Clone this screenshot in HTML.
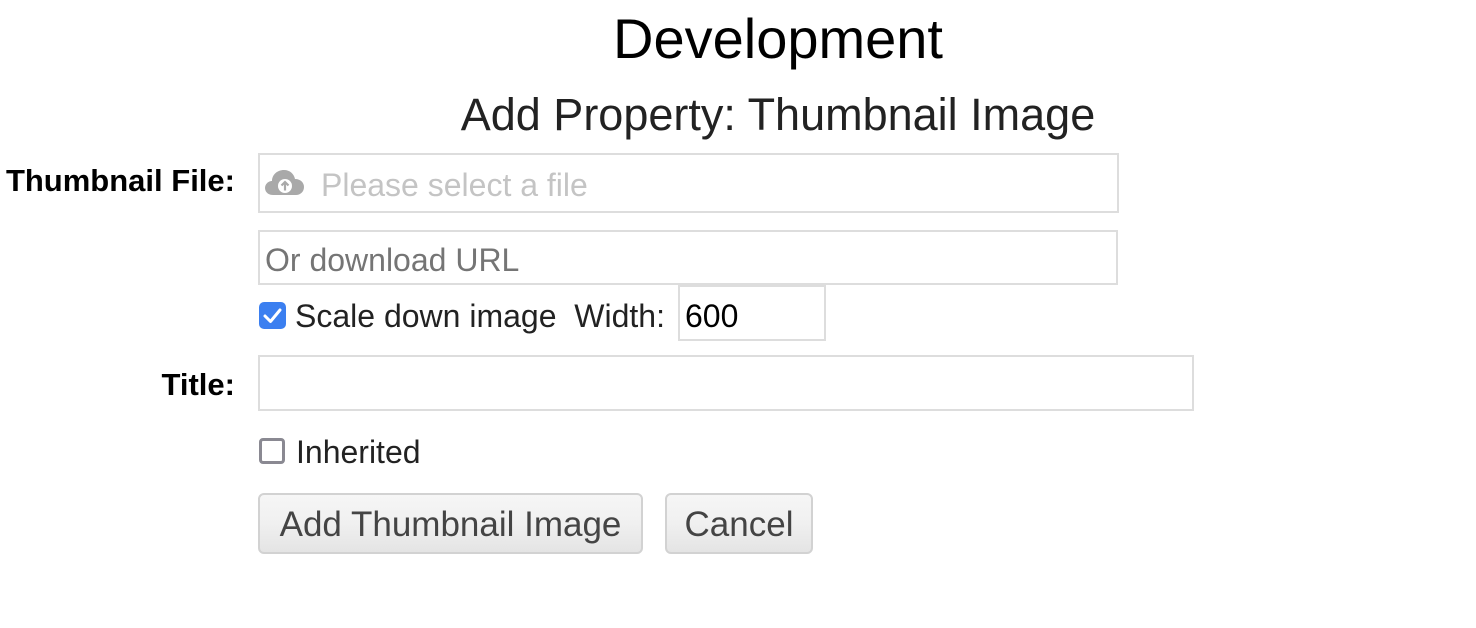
<!DOCTYPE html>
<html><head><meta charset="utf-8"><style>
body{margin:0;width:1476px;height:628px;background:#fff;font-family:"Liberation Sans",Arial,sans-serif;position:relative;overflow:hidden}
.a{position:absolute;white-space:nowrap;line-height:1}
.box{position:absolute;border:2px solid #ddd;box-sizing:border-box;background:#fff}
.btn{position:absolute;box-sizing:border-box;border:2px solid #d2d2d2;border-radius:6px;background:linear-gradient(#f6f6f6,#f0f0f0 50%,#e4e4e4);color:#444;font-size:35px;text-align:center;line-height:60px}
</style></head><body>
<div class="a" style="left:0;width:1556px;text-align:center;top:11px;font-size:56px;color:#000">Development</div>
<div class="a" style="left:0;width:1556px;text-align:center;top:92px;font-size:45px;color:#222">Add Property: Thumbnail Image</div>
<div class="a" style="right:1241px;top:165px;font-size:31px;font-weight:bold;color:#000">Thumbnail File:</div>
<div class="box" style="left:258px;top:153px;width:861px;height:60px"></div>
<svg style="position:absolute;left:264px;top:167px" width="41" height="30" viewBox="0 0 41 30"><path d="M9 28 C2 28 0 22 1.5 18.5 C3 15 6 14 8 14 C8 8 13 3 20 3 C26 3 30 7 31 12 C37 12 40 16 40 20 C40 25 36 28 32 28 Z" fill="#a9a9a9"/><circle cx="21" cy="19" r="7" fill="#fff"/><path d="M21 23.5V15.5M17.5 18.5L21 15 24.5 18.5" stroke="#a9a9a9" stroke-width="2.2" fill="none"/></svg>
<div class="a" style="left:321px;top:169px;font-size:32px;color:#c4c4c4">Please select a file</div>
<div class="box" style="left:258px;top:230px;width:860px;height:55px"></div>
<div class="a" style="left:265px;top:244px;font-size:32px;color:#757575">Or download URL</div>
<div style="position:absolute;left:259px;top:302px;width:27px;height:27px;border-radius:5px;background:#3b7ff0"></div>
<svg style="position:absolute;left:259px;top:302px" width="27" height="27"><path d="M6 14 L11.5 19.5 L21 8" stroke="#fff" stroke-width="3" fill="none" stroke-linecap="round" stroke-linejoin="round"/></svg>
<div class="a" style="left:295px;top:300px;font-size:32px;color:#222">Scale down image&nbsp; Width:</div>
<div class="box" style="left:678px;top:285px;width:148px;height:56px"></div>
<div class="a" style="left:685px;top:300px;font-size:32px;color:#000">600</div>
<div class="a" style="right:1241px;top:369px;font-size:31px;font-weight:bold;color:#000">Title:</div>
<div class="box" style="left:258px;top:355px;width:936px;height:56px"></div>
<div style="position:absolute;left:259px;top:438px;width:26px;height:26px;box-sizing:border-box;border:3px solid #8a8992;border-radius:4px"></div>
<div class="a" style="left:296px;top:436px;font-size:32px;color:#222">Inherited</div>
<div class="btn" style="left:258px;top:493px;width:385px;height:61px">Add Thumbnail Image</div>
<div class="btn" style="left:665px;top:493px;width:148px;height:61px">Cancel</div>
</body></html>
